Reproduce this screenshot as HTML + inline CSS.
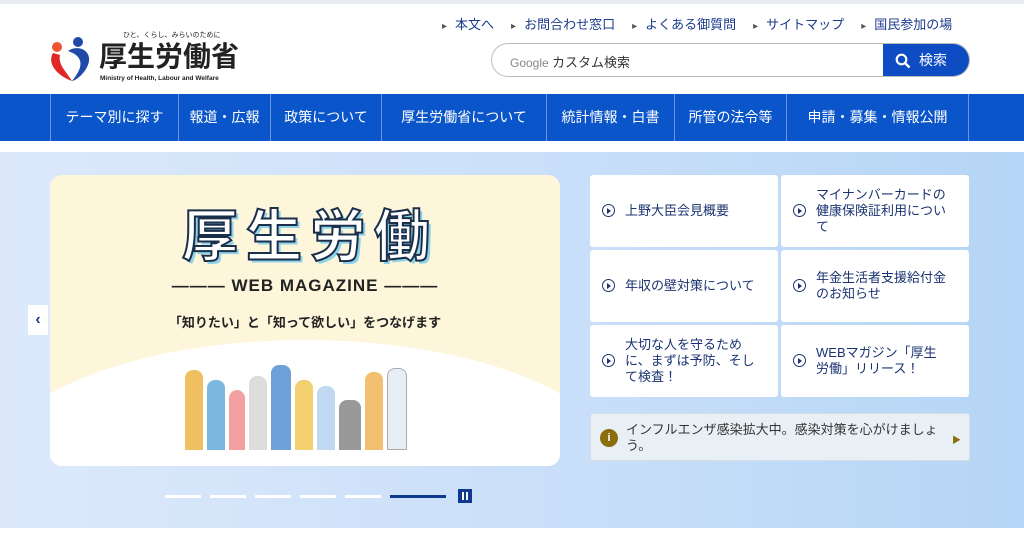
<!DOCTYPE html>
<html><head><meta charset="utf-8"><style>
*{margin:0;padding:0;box-sizing:border-box}
body{width:1024px;height:557px;overflow:hidden;font-family:"Liberation Sans","Noto Sans CJK JP",sans-serif;background:#fff;position:relative}
.top{position:absolute;top:0;left:0;width:1024px;height:4px;background:#e8ebf0}
.links{position:absolute;top:14px;left:442px;font-size:13px;color:#1a3a8a;white-space:nowrap}
.links span{margin-right:17px}
.links span:before{content:"▸";color:#555;font-size:10px;margin-right:8px}
.search{position:absolute;left:491px;top:43px;width:479px;height:34px;border:1px solid #bbb;border-radius:17px;overflow:hidden;font-size:13px}
.search .g{position:absolute;left:18px;top:8px;color:#888;font-size:12px}
.search .g b{color:#333;font-weight:normal;font-size:13px}
.search .btn{position:absolute;right:0;top:0;width:86px;height:34px;background:#0d4cc2;color:#fff;font-size:14px;line-height:33px;padding-left:36px}
.nav{position:absolute;top:94px;left:0;width:1024px;height:47px;background:#0a55c9}
.nav div{position:absolute;top:0;height:47px;border-left:1px solid #6f96dc;color:#fff;font-size:14px;line-height:46px;text-align:center}
.hero{position:absolute;top:152px;left:0;width:1024px;height:376px;background:linear-gradient(90deg,#dde9fb,#c7def9 60%,#b5d5f6)}
.banner{position:absolute;left:50px;top:175px;width:510px;height:291px;border-radius:12px;background:#fdf6db;overflow:hidden}
.arc{position:absolute;left:-60px;top:165px;width:630px;height:260px;border-radius:50%;background:#fff}
.card{position:absolute;background:#fff;border-radius:3px;color:#1a3370;font-size:13px;line-height:16px;display:flex;align-items:center;padding-left:35px;padding-right:22px}
.card:before{content:"";position:absolute;left:12px;top:50%;margin-top:-7px;width:11px;height:11px;border:1.5px solid #1a3370;border-radius:50%}
.card:after{content:"";position:absolute;left:17px;top:50%;margin-top:-3px;border-left:4px solid #1a3370;border-top:3px solid transparent;border-bottom:3px solid transparent}
.alert{position:absolute;left:590px;top:413px;width:380px;height:48px;background:#e9f0f5;border:1px solid #d5dde5;border-radius:3px;font-size:13px;color:#333;line-height:16px;padding:8px 30px 0 35px}
.alert i{position:absolute;left:9px;top:15px;width:18px;height:18px;border-radius:50%;background:#8a6d0c;color:#fff;font-style:normal;font-size:11px;text-align:center;line-height:18px;font-weight:bold}
.ind{position:absolute;top:495px;height:3px;width:36px;background:#fff}
.prev{position:absolute;left:28px;top:305px;width:20px;height:30px;background:#fff;color:#1a3a8a;font-size:16px;text-align:center;line-height:30px;font-weight:bold}
</style></head><body>
<div class="top"></div>
<svg style="position:absolute;left:48px;top:35px" width="48" height="48" viewBox="0 0 48 48">
<circle cx="9" cy="12" r="5" fill="#e53"/><path d="M5 18 C-2 30 12 42 24 46 C18 36 10 30 12 20Z" fill="#e02828"/>
<circle cx="30" cy="7" r="5" fill="#1f4aa8"/><path d="M20 16 C32 8 48 18 38 34 C33 42 26 46 24 46 C34 34 38 22 20 16Z" fill="#1f4aa8"/></svg>
<div style="position:absolute;left:123px;top:30px;font-size:7px;color:#222">ひと、くらし、みらいのために</div>
<div style="position:absolute;left:99px;top:41px;font-size:28px;font-weight:bold;color:#222;line-height:32px">厚生労働省</div>
<div style="position:absolute;left:100px;top:75px;font-size:6.5px;color:#222;font-weight:bold">Ministry of Health, Labour and Welfare</div>
<div class="links"><span>本文へ</span><span>お問合わせ窓口</span><span>よくある御質問</span><span>サイトマップ</span><span style="margin:0">国民参加の場</span></div>
<div class="search"><div class="g">Google <b>カスタム検索</b></div><div class="btn"><svg style="position:absolute;left:12px;top:9px" width="16" height="16" viewBox="0 0 16 16"><circle cx="6.5" cy="6.5" r="4.8" stroke="#fff" stroke-width="2.2" fill="none"/><path d="M10 10l4.5 4.5" stroke="#fff" stroke-width="2.4"/></svg>検索</div></div>
<div class="nav">
<div style="left:50px;width:128px">テーマ別に探す</div>
<div style="left:178px;width:92px">報道・広報</div>
<div style="left:270px;width:111px">政策について</div>
<div style="left:381px;width:165px">厚生労働省について</div>
<div style="left:546px;width:128px">統計情報・白書</div>
<div style="left:674px;width:112px">所管の法令等</div>
<div style="left:786px;width:183px;border-right:1px solid #6f96dc">申請・募集・情報公開</div>
</div>
<div class="hero"></div>
<div class="banner"><div class="arc"></div>
<div style="position:absolute;left:0;width:520px;top:30px;text-align:center;font-size:56px;font-weight:bold;color:#fff;-webkit-text-stroke:2px #1a2f4a;letter-spacing:8px;text-shadow:3px 3px 0 #8fd3e8;line-height:64px">厚生労働</div>
<div style="position:absolute;left:0;width:510px;top:101px;text-align:center;font-size:17px;font-weight:bold;color:#222;letter-spacing:1px">——— WEB MAGAZINE ———</div>
<div style="position:absolute;left:0;width:510px;top:137px;text-align:center;font-size:13px;font-weight:bold;color:#222">「知りたい」と「知って欲しい」をつなげます</div>
<div style="position:absolute;left:135px;top:190px;width:250px;height:85px;display:flex;gap:4px;align-items:flex-end">
<div style="width:18px;height:80px;background:#f0c060;border-radius:8px 8px 0 0"></div><div style="width:18px;height:70px;background:#7ab8e0;border-radius:8px 8px 0 0"></div><div style="width:16px;height:60px;background:#f4a0a0;border-radius:8px 8px 0 0"></div><div style="width:18px;height:74px;background:#ddd;border-radius:8px 8px 0 0"></div><div style="width:20px;height:85px;background:#6fa0d8;border-radius:8px 8px 0 0"></div><div style="width:18px;height:70px;background:#f2d070;border-radius:8px 8px 0 0"></div><div style="width:18px;height:64px;background:#c0d8f0;border-radius:8px 8px 0 0"></div><div style="width:22px;height:50px;background:#999;border-radius:8px 8px 0 0"></div><div style="width:18px;height:78px;background:#f2c070;border-radius:8px 8px 0 0"></div><div style="width:20px;height:82px;background:#e8eef5;border:1px solid #aaa;border-radius:8px 8px 0 0"></div></div>
</div>
<div class="prev">‹</div>
<div class="card" style="left:590px;top:175px;width:188px;height:72px">上野大臣会見概要</div>
<div class="card" style="left:781px;top:175px;width:188px;height:72px">マイナンバーカードの健康保険証利用について</div>
<div class="card" style="left:590px;top:250px;width:188px;height:72px">年収の壁対策について</div>
<div class="card" style="left:781px;top:250px;width:188px;height:72px">年金生活者支援給付金のお知らせ</div>
<div class="card" style="left:590px;top:325px;width:188px;height:72px">大切な人を守るために、まずは予防、そして検査！</div>
<div class="card" style="left:781px;top:325px;width:188px;height:72px">WEBマガジン「厚生労働」リリース！</div>
<div class="alert"><i>i</i>インフルエンザ感染拡大中。感染対策を心がけましょう。<span style="position:absolute;right:8px;top:18px;color:#8a6d0c;font-size:9px">▶</span></div>
<div class="ind" style="left:165px"></div><div class="ind" style="left:210px"></div><div class="ind" style="left:255px"></div><div class="ind" style="left:300px"></div><div class="ind" style="left:345px"></div>
<div class="ind" style="left:390px;width:56px;background:#0d3a8c"></div>
<div style="position:absolute;left:458px;top:489px;width:14px;height:14px;background:#0d3a8c"><div style="position:absolute;left:4px;top:3px;width:2px;height:8px;background:#fff"></div><div style="position:absolute;left:8px;top:3px;width:2px;height:8px;background:#fff"></div></div>
</body></html>
